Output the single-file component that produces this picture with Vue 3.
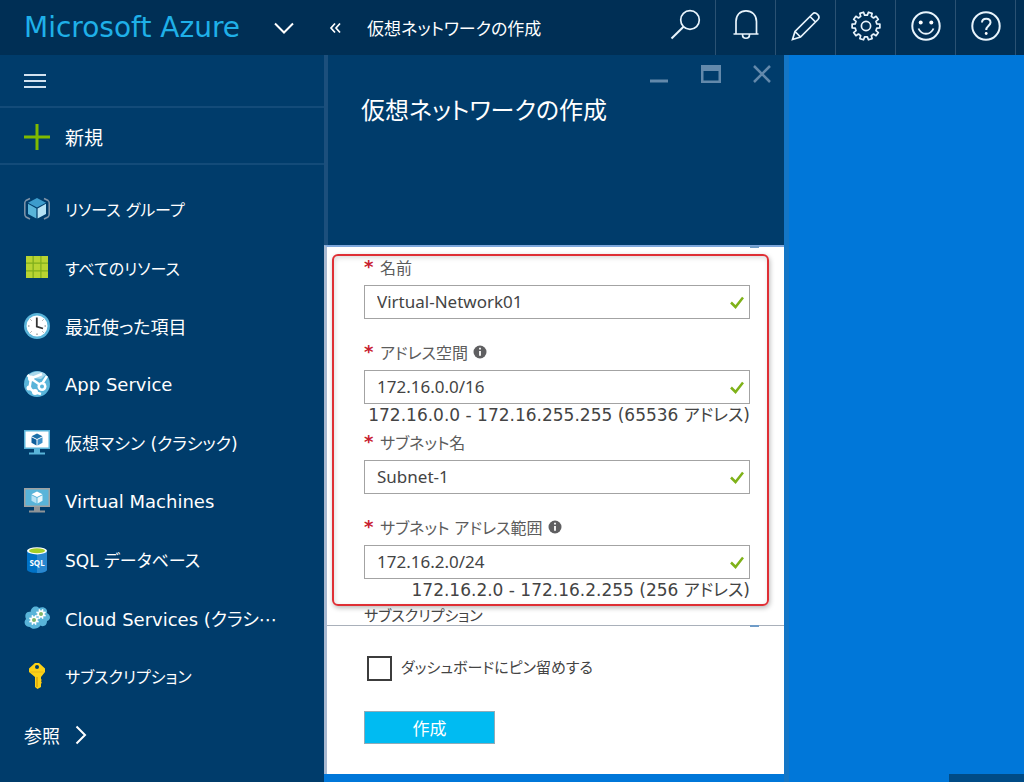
<script setup>
import { ref } from 'vue'

const tools = [
  { id: 'search', label: '検索' },
  { id: 'bell', label: '通知' },
  { id: 'pencil', label: '編集' },
  { id: 'gear', label: '設定' },
  { id: 'smile', label: 'フィードバック' },
  { id: 'help', label: 'ヘルプ' },
]

const menu = [
  { icon: 'group', text: 'リソース グループ', size: 'kana' },
  { icon: 'grid', text: 'すべてのリソース', size: 'kana' },
  { icon: 'clock', text: '最近使った項目' },
  { icon: 'app', text: 'App Service' },
  { icon: 'vmc', text: '仮想マシン (クラシック)', size: 'mixed' },
  { icon: 'vm', text: 'Virtual Machines' },
  { icon: 'sql', text: 'SQL データベース', size: 'mixed' },
  { icon: 'cloud', text: 'Cloud Services (クラシ⋯' },
  { icon: 'key', text: 'サブスクリプション', size: 'kana' },
]

const fields = ref([
  { id: 'name', label: '名前', value: 'Virtual-Network01' },
  { id: 'space', label: 'アドレス空間', value: '172.16.0.0/16', info: true, hint: '172.16.0.0 - 172.16.255.255 (65536 アドレス)' },
  { id: 'subnet', label: 'サブネット名', value: 'Subnet-1' },
  { id: 'range', label: 'サブネット アドレス範囲', value: '172.16.2.0/24', info: true, hint: '172.16.2.0 - 172.16.2.255 (256 アドレス)' },
])
const pinned = ref(false)

function gearPath(cx, cy, outer, inner, teeth) {
  const step = (Math.PI * 2) / teeth
  const at = (r, a) => `${(cx + r * Math.sin(a)).toFixed(2)} ${(cy - r * Math.cos(a)).toFixed(2)}`
  const pts = []
  for (let i = 0; i < teeth; i++) {
    const a = (i + 0.5) * step
    pts.push(at(inner, a - step * 0.3), at(outer, a - step * 0.22), at(outer, a + step * 0.22), at(inner, a + step * 0.3))
  }
  return 'M' + pts.join('L') + 'Z'
}
const bigGear = gearPath(16, 16, 14, 11, 10)
const cloudGearA = gearPath(10, 15, 5, 3.6, 8)
const cloudGearB = gearPath(17, 9, 5, 3.6, 8)
</script>

<template>
  <div class="portal" lang="ja">
    <header class="topbar">
      <a class="brand" href="#">Microsoft Azure</a>
      <button class="chevron" aria-label="メニュー">
        <svg width="20" height="12" viewBox="0 0 20 12"><path d="M1 1.500L10 10.500L19 1.500" fill="none" stroke="#fff" stroke-width="2" /></svg>
      </button>
      <button class="collapse" aria-label="折りたたむ">
        <svg width="11" height="10" viewBox="0 0 11 10"><path d="M5 .5L1 5L5 9.500M10 .5L6 5L10 9.500" fill="none" stroke="#fff" stroke-width="1.700" /></svg>
      </button>
      <span class="crumb">仮想ネットワークの作成</span>
      <nav class="tools">
        <button v-for="t in tools" :key="t.id" class="tool" :aria-label="t.label">
          <svg width="32" height="32" viewBox="0 0 32 32" fill="none" stroke="#e8f4fc" stroke-width="1.700">
            <template v-if="t.id === 'search'"><circle cx="20" cy="10" r="9.300" /><path d="M13.500 16.800L1.500 28.500" stroke-width="2" /></template>
            <template v-else-if="t.id === 'bell'"><path d="M3.500 24H28.500M6 24V11.500C6 5 10 .9 16 .9S26.500 5 26.500 11.500V24M12.500 24.500C12.500 29.500 19.500 29.500 19.500 24.500" /></template>
            <template v-else-if="t.id === 'pencil'"><path d="M2.500 29.500L5 21.500L22.500 4C25.500 1 31 6 28 9.500L10.500 27ZM5 21.500L10.500 27M20 6.500L25.500 12M2.500 29.500L10.500 27" stroke-width="1.700" /></template>
            <template v-else-if="t.id === 'gear'"><path :d="bigGear" stroke-linejoin="round" /><circle cx="16" cy="16" r="4.600" /></template>
            <template v-else-if="t.id === 'smile'"><circle cx="16" cy="16" r="13.700" stroke-width="2" /><path d="M8.500 18.500C11.500 25.500 20.500 25.500 23.500 18.500" stroke-width="1.800" /><circle cx="10.700" cy="12.500" r="2" fill="#fff" stroke="none" /><circle cx="21.300" cy="12.500" r="2" fill="#fff" stroke="none" /></template>
            <template v-else><circle cx="16" cy="16" r="13.700" stroke-width="2" /><path d="M12 12.500C12 7.500 20.500 7.500 20.500 12.500C20.500 15.500 16.200 16 16.200 20" stroke-width="2" /><circle cx="16.200" cy="23.500" r="1.400" fill="#fff" stroke="none" /></template>
          </svg>
        </button>
      </nav>
    </header>

    <div class="body">
      <aside class="sidebar">
        <button class="burger" aria-label="メニューの表示">
          <svg width="22" height="16" viewBox="0 0 22 16"><path d="M0 2H22M0 8H22M0 14H22" stroke="#d3e2ef" stroke-width="2" /></svg>
        </button>
        <button class="new">
          <svg width="26" height="26" viewBox="0 0 26 26"><path d="M13 0V26M0 13H26" stroke="#7fba00" stroke-width="3" /></svg>
          <span>新規</span>
        </button>
        <nav class="menu">
          <a v-for="m in menu" :key="m.icon" href="#" class="item" :class="m.size">
            <svg width="26" height="26" viewBox="0 0 26 26">
              <template v-if="m.icon === 'group'">
                <path d="M6 2.500L2 4.500Q.8 5.500 .8 7V18Q.8 20 2 21L6 23M20 2.500L24 4.500Q25.200 5.500 25.200 7V18Q25.200 20 24 21L20 23" fill="none" stroke="#8094a8" stroke-width="1.500" />
                <path d="M13 2L22 6.800L13 11.500L4 6.800Z" fill="#3d9ccc" /><path d="M4 7.800L12.400 12.400V22.500L4 18Z" fill="#59b4d9" /><path d="M22 7.800L13.600 12.400V22.500L22 18Z" fill="#b5e1f4" />
              </template>
              <template v-else-if="m.icon === 'grid'">
                <path d="M2 1H24V23H2Z" fill="#7fae1c" />
                <path d="M2 1h6.500v6.500h-6.500zM9.800 1h6.500v6.500h-6.500zM17.500 1h6.500v6.500h-6.500zM2 8.800h6.500v6.500h-6.500zM9.800 8.800h6.500v6.500h-6.500zM17.500 8.800h6.500v6.500h-6.500zM2 16.500h6.500v6.500h-6.500zM9.800 16.500h6.500v6.500h-6.500zM17.500 16.500h6.500v6.500h-6.500z" fill="#b8d432" />
              </template>
              <template v-else-if="m.icon === 'clock'">
                <circle cx="13" cy="13" r="13" fill="#59b4d9" /><circle cx="13" cy="13" r="10.500" fill="#fff" />
                <path d="M12.800 4.500V13.500L19 15.500" fill="none" stroke="#333" stroke-width="1.800" />
                <path d="M13 22V20.500M4 13H5.500M20.500 13H22M6.500 6.500L7.500 7.500M19.500 6.500L18.500 7.500M6.500 19.500L7.500 18.500M19.500 19.500L18.500 18.500" stroke="#777" />
              </template>
              <template v-else-if="m.icon === 'app'">
                <circle cx="13" cy="13" r="13" fill="#59b4d9" />
                <path d="M4 4.500C9 0 17 -1 22 3.500L17 8L9 7Z" fill="#a9d8ec" />
                <path d="M7 7.500L17 14.500M7 7.500L5.500 17M5.500 17L10 21M17 14.500L23 5M3.500 4L7 7.500L18 3M10 21L17 23" fill="none" stroke="#fff" stroke-width="2.500" />
                <circle cx="7" cy="7.500" r="3" fill="#fff" /><circle cx="18" cy="15.500" r="4.500" fill="#fff" /><circle cx="18" cy="15.500" r="2" fill="#59b4d9" /><circle cx="5" cy="17" r="2.500" fill="#fff" /><circle cx="11" cy="21" r="3" fill="#fff" />
              </template>
              <template v-else-if="m.icon === 'vmc' || m.icon === 'vm'">
                <path d="M0 0H26V19H0Z" :fill="m.icon === 'vmc' ? '#59b4d9' : '#a0a1a2'" />
                <path d="M1.500 1.500H24.500V17.500H1.500Z" :fill="m.icon === 'vmc' ? '#fff' : '#59b4d9'" />
                <path d="M10 19H16V22.500H21V24.500H5V22.500H10Z" :fill="m.icon === 'vmc' ? '#59b4d9' : '#8f9497'" />
                <path d="M13 3.500L18.500 6.300L13 9L7.500 6.300Z" :fill="m.icon === 'vmc' ? '#1d70a9' : '#fff'" />
                <path d="M7.500 7.200L12.500 9.800V15.500L7.500 12.800Z" :fill="m.icon === 'vmc' ? '#0f5f9c' : '#b5e1f4'" />
                <path d="M18.500 7.200L13.500 9.800V15.500L18.500 12.800Z" :fill="m.icon === 'vmc' ? '#3b8fc9' : '#e5f5fb'" />
              </template>
              <template v-else-if="m.icon === 'sql'">
                <path d="M3 3.500V22.500C3 27 23 27 23 22.500V3.500Z" fill="#0072c6" /><path d="M13 3.500V26C18 26 23 25 23 22.500V3.500Z" fill="#2a88d0" />
                <ellipse cx="13" cy="3.800" rx="10" ry="3.600" fill="#fff" /><ellipse cx="13" cy="3.800" rx="8" ry="2.500" fill="#a4cf2a" />
                <text x="13" y="18.500" text-anchor="middle" class="sql">SQL</text>
              </template>
              <template v-else-if="m.icon === 'cloud'">
                <path d="M6 22C1 22-1 17 2 14C0 9 3 6 6.500 7C7 2 12 0 15 3C20 1 24 4 23 8C27 10 27 15 23 16C23 21 19 22 16.500 20.500C14 24 8 25 6 22Z" fill="#59b4d9" />
                <path :d="cloudGearA" fill="#fff" /><path :d="cloudGearB" fill="#fff" /><circle cx="10" cy="15" r="2" fill="#7fb56a" /><circle cx="17" cy="9" r="2" fill="#7fb56a" />
              </template>
              <template v-else>
                <path d="M11 0H15L21 5.500V9L17 14V24L13.500 26L11 24V14L5 9V5.500Z" fill="#fcd116" /><circle cx="13" cy="4" r="2" fill="#003c6b" /><path d="M13 14V24" stroke="#dba50b" stroke-width="1.500" /><path d="M6.500 9H19.500" stroke="#e8b51a" /><path d="M17 16L18 17L17 18L18 19.500L17 21Z" fill="#dba50b" />
              </template>
            </svg>
            <span>{{ m.text }}</span>
          </a>
          <a href="#" class="item">
            <span>参照</span>
            <svg width="12" height="20" viewBox="0 0 12 20"><path d="M1.500 1.500L10 10L1.500 18.500" fill="none" stroke="#fff" stroke-width="2" /></svg>
          </a>
        </nav>
      </aside>

      <main class="blade">
        <div class="blade-head">
          <div class="window-buttons">
            <button aria-label="最小化"><svg width="20" height="18" viewBox="0 0 20 18"><path d="M1 16H19" stroke="#6389ab" stroke-width="3" /></svg></button>
            <button aria-label="最大化"><svg width="20" height="18" viewBox="0 0 20 18"><path d="M0 0H20V18H0ZM2.500 6V15.500H17.500V6Z" fill="#6389ab" fill-rule="evenodd" /></svg></button>
            <button aria-label="閉じる"><svg width="18" height="18" viewBox="0 0 18 18"><path d="M1 1L17 17M17 1L1 17" stroke="#6389ab" stroke-width="2.500" /></svg></button>
          </div>
          <h1>仮想ネットワークの作成</h1>
        </div>

        <form class="form" @submit.prevent>
          <div class="callout">
            <div v-for="f in fields" :key="f.id" class="field" :class="{ hinted: f.hint }">
              <div class="label-row">
                <span class="star">*</span>
                <label :for="f.id">{{ f.label }}</label>
                <svg v-if="f.info" width="14" height="14" viewBox="0 0 14 14"><circle cx="7" cy="7" r="6.500" fill="#5f5f61" /><path d="M7 6V10.800M7 2.800V4.500" stroke="#fff" stroke-width="1.800" fill="none" /></svg>
              </div>
              <div class="box">
                <input :id="f.id" v-model="f.value" type="text" />
                <svg width="14" height="13" viewBox="0 0 14 13"><path d="M1 6.500L5.500 11L13 1.500" fill="none" stroke="#7fb219" stroke-width="2.500" /></svg>
              </div>
              <p v-if="f.hint" class="hint">{{ f.hint }}</p>
            </div>
          </div>
          <div class="next-label">サブスクリプション</div>
          <div class="footer">
            <label class="pin"><input v-model="pinned" type="checkbox" /><span>ダッシュボードにピン留めする</span></label>
            <button class="create" type="submit">作成</button>
          </div>
        </form>
      </main>
      <div class="canvas"><div class="tile"></div></div>
    </div>
  </div>
</template>

<style>
body {
  margin: 0;
  background: #0077d9;
}
</style>

<style scoped>
.portal {
  display: flex;
  flex-direction: column;
  min-height: 100vh;
  font-family: "DejaVu Sans", "Noto Sans CJK JP", sans-serif;
  font-feature-settings: "palt";
  font-size: 18px;
  color: #fff;
}
.portal * { box-sizing: border-box; }
button {
  padding: 0;
  border: 0;
  background: none;
  font: inherit;
  color: inherit;
}
a { color: inherit; text-decoration: none; }
svg { display: block; flex: none; overflow: visible; }
.topbar {
  display: flex;
  align-items: center;
  height: 55px;
  padding: 0 8px 0 24px;
  background: #002f55;
}
.brand { font-size: 28px; color: #1fb0e8; }
.chevron { margin-left: 34px; }
.collapse { margin-left: 36px; }
.crumb { margin-left: 26px; font-size: 17px; white-space: nowrap; }
.tools { display: flex; height: 100%; margin-left: auto; }
.tool {
  display: flex;
  align-items: center;
  justify-content: center;
  width: 60px;
  padding-bottom: 4px;
  border-right: 1px solid #2b5273;
}
.body {
  flex: 1;
  display: grid;
  grid-template-columns: 324px 460px 1fr;
}
.sidebar {
  display: flex;
  flex-direction: column;
  background: #003c6b;
}
.burger, .new {
  display: flex;
  align-items: center;
  padding-left: 24px;
  border-bottom: 2px solid #134b79;
}
.burger { height: 53px; }
.new {
  gap: 15px;
  height: 57px;
  padding-top: 2px;
  font-size: 19px;
}
.menu {
  flex: 1;
  display: grid;
  grid-auto-rows: 1fr;
  padding: 15px 0 19px;
}
.item {
  display: flex;
  align-items: center;
  gap: 15px;
  padding-left: 24px;
  white-space: nowrap;
}
.item.mixed { font-size: 17px; }
.item.kana { font-size: 16px; }
.sql { font: bold 8px "Noto Sans", sans-serif; fill: #fff; }
.blade {
  display: flex;
  flex-direction: column;
  padding-bottom: 9px;
}
.blade-head {
  height: 190px;
  border-left: 4px solid #1c4f7c;
  background: #003c6b;
}
.window-buttons {
  display: flex;
  justify-content: flex-end;
  gap: 32px;
  padding: 10px 13px 0 0;
}
h1 {
  margin: 10px 0 0 33px;
  font-size: 24px;
  line-height: 36px;
  font-weight: 400;
}
.form {
  position: relative;
  flex: 1;
  border-top: 2px solid #7da7dc;
  border-left: 3px solid #a9b9d0;
  background: #fff;
  color: #444;
}
.form::after, .footer::before {
  content: "";
  position: absolute;
  top: -1px;
  right: 25px;
  width: 9px;
  height: 2px;
  background: #6f9cc8;
}
.callout {
  margin: 7px 15px 0 5px;
  padding: 0 17px 2px 30px;
  border: 2px solid #df2f35;
  border-radius: 6px;
  box-shadow: 1px 2px 5px #bbb, inset 1px 2px 5px #ddd;
}
.field + .field { margin-top: 22px; }
.field.hinted + .field { margin-top: 4px; }
.label-row {
  display: flex;
  align-items: center;
  gap: 5px;
  height: 23px;
  margin-bottom: 6px;
  padding-bottom: 2px;
  font-size: 16px;
  color: #5c5c5c;
}
.star {
  width: 11px;
  font-size: 18px;
  font-weight: 700;
  color: #c8202f;
}
.box {
  display: flex;
  align-items: center;
  height: 34px;
  padding: 0 5px 0 12px;
  border: 1px solid #a3a3a3;
}
.box input {
  flex: 1;
  min-width: 0;
  padding: 0;
  border: 0;
  outline: 0;
  background: none;
  font: 17px/24px "Noto Sans", sans-serif;
  color: #444;
}
.hint {
  margin: 0;
  font-size: 17px;
  line-height: 23px;
  text-align: right;
  white-space: nowrap;
}
.next-label {
  height: 19px;
  padding-left: 37px;
  font-size: 15px;
  line-height: 21px;
}
.footer {
  position: relative;
  padding: 30px 37px;
  border-top: 1px solid #a9b0ba;
}
.pin {
  display: flex;
  align-items: center;
  gap: 9px;
  margin-left: 3px;
  font-size: 15px;
  line-height: 25px;
}
.pin input {
  appearance: none;
  width: 25px;
  height: 25px;
  margin: 0;
  border: 2px solid #3c3c3c;
  background: #fff;
}
.create {
  width: 131px;
  height: 33px;
  margin-top: 30px;
  border: 1px solid #8fabb8;
  background: #00bbf2;
  font-size: 17px;
  color: #fff;
}
.canvas {
  display: flex;
  align-items: flex-end;
  justify-content: flex-end;
  border-left: 5px solid #1476c6;
  background: #0077d9;
}
.tile { width: 75px; height: 9px; background: #004b86; }
</style>
